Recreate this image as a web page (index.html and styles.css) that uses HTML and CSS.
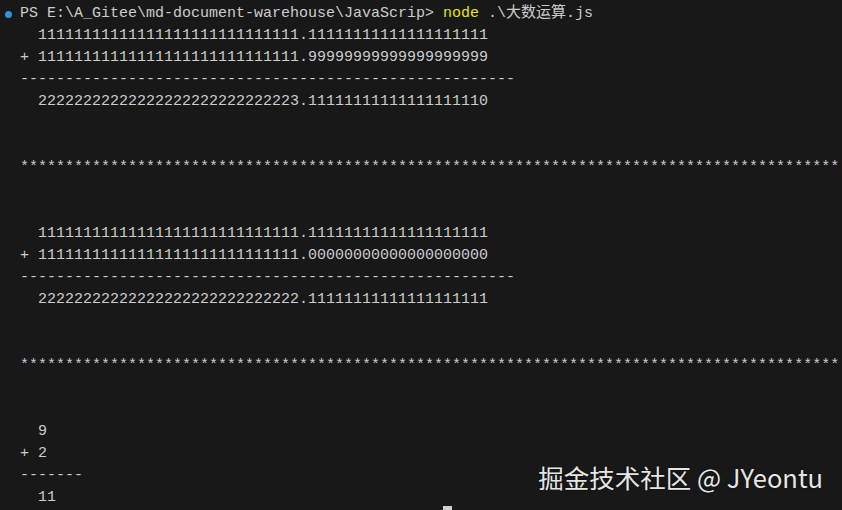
FILE: index.html
```html
<!DOCTYPE html>
<html lang="en">
<head>
  <meta charset="UTF-8" />
  <meta name="viewport" content="width=device-width, initial-scale=1.0"/>
  <title>Terminal - 大数运算</title>
  <link rel="stylesheet" href="styles.css">
</head>
<body>

  <div class="terminal">
    <div class="line"><span class="gutter"><span class="dot"></span></span><span class="text">PS E:\A_Gitee\md-document-warehouse\JavaScrip&gt; <span class="cmd">node</span> .\大数运算.js</span></div>
    <div class="line"><span class="gutter"></span><span class="text">  11111111111111111111111111111.11111111111111111111</span></div>
    <div class="line"><span class="gutter"></span><span class="text">+ 11111111111111111111111111111.99999999999999999999</span></div>
    <div class="line"><span class="gutter"></span><span class="text">-------------------------------------------------------</span></div>
    <div class="line"><span class="gutter"></span><span class="text">  22222222222222222222222222223.11111111111111111110</span></div>
    <div class="line"></div>
    <div class="line"></div>
    <div class="line"><span class="gutter"></span><span class="text">*******************************************************************************************</span></div>
    <div class="line"></div>
    <div class="line"></div>
    <div class="line"><span class="gutter"></span><span class="text">  11111111111111111111111111111.11111111111111111111</span></div>
    <div class="line"><span class="gutter"></span><span class="text">+ 11111111111111111111111111111.00000000000000000000</span></div>
    <div class="line"><span class="gutter"></span><span class="text">-------------------------------------------------------</span></div>
    <div class="line"><span class="gutter"></span><span class="text">  22222222222222222222222222222.11111111111111111111</span></div>
    <div class="line"></div>
    <div class="line"></div>
    <div class="line"><span class="gutter"></span><span class="text">*******************************************************************************************</span></div>
    <div class="line"></div>
    <div class="line"></div>
    <div class="line"><span class="gutter"></span><span class="text">  9</span></div>
    <div class="line"><span class="gutter"></span><span class="text">+ 2</span></div>
    <div class="line"><span class="gutter"></span><span class="text">-------</span></div>
    <div class="line"><span class="gutter"></span><span class="text">  11</span></div>
    <div class="line"><span class="gutter"></span><span class="text">                                               <span class="cursor"> </span></span></div>
  </div>

  <div class="watermark">掘金技术社区 @ JYeontu</div>

</body>
</html>
```

FILE: styles.css
```css
:root {
  --bg: #181818;
  --fg: #cccccc;
  --yellow: #e5e510;
  --blue: #2f93d6;
}

html, body {
  height: 100%;
}

body {
  margin: 0;
  background: var(--bg);
  color: var(--fg);
  overflow: hidden;
  position: relative;
}

.terminal {
  padding-top: 3px;
  font-family: 'Liberation Mono', 'Noto Sans CJK SC', monospace;
  font-size: 15px;
}

.line {
  display: flex;
  height: 22px;
  line-height: 22px;
  white-space: pre;
}

.gutter {
  flex: 0 0 20px;
  display: flex;
  align-items: center;
  justify-content: center;
  padding-right: 4px;
  box-sizing: border-box;
}

.dot {
  width: 7px;
  height: 7px;
  border-radius: 50%;
  background: var(--blue);
}

.text {
  white-space: pre;
}

.cmd {
  color: var(--yellow);
}

.cursor {
  display: inline-block;
  width: 9px;
  height: 20px;
  margin-top: -3px;
  vertical-align: top;
  background: #d0d0d0;
}

.watermark {
  position: absolute;
  right: 19px;
  bottom: 18px;
  font-family: 'Noto Sans CJK SC', 'Noto Sans', sans-serif;
  font-size: 25.5px;
  line-height: 30px;
  color: #e6e6e6;
  text-shadow: 0 0 2px rgba(0, 0, 0, 0.6);
}
```
